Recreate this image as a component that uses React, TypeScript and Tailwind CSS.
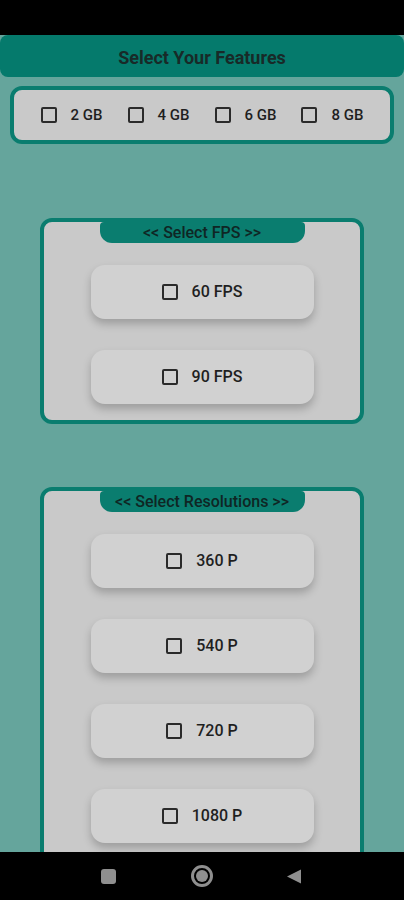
import React, { useState } from "react";

function Box({ checked }: { checked: boolean }) {
  return (
    <span
      className={
        "flex h-[16px] w-[16px] items-center justify-center rounded-[2px] border-2 border-[#2a2a2a] " +
        (checked ? "bg-[#00796b] border-[#00796b]" : "")
      }
    >
      {checked && (
        <svg viewBox="0 0 16 16" className="h-[12px] w-[12px]">
          <path d="M3 8.5l3 3 7-7" stroke="white" strokeWidth="2.2" fill="none" />
        </svg>
      )}
    </span>
  );
}

function OptionButton({ label }: { label: string }) {
  const [on, setOn] = useState(false);
  return (
    <button
      onClick={() => setOn(!on)}
      className="flex h-[54px] w-[223px] shrink-0 items-center justify-center gap-[14px] rounded-[14px] bg-[#d1d1d1] shadow-[0_5px_8px_rgba(0,0,0,0.22)]"
    >
      <Box checked={on} />
      <span className="text-[16px] font-medium text-[#1f1f1f]">{label}</span>
    </button>
  );
}

function Section({ title, items }: { title: string; items: string[] }) {
  return (
    <div className="mx-[40px] flex flex-col items-center rounded-[12px] border-4 border-[#0a7d6f] bg-[#c9c9c9] pb-[16px]">
      <div className="flex h-[21px] w-[205px] items-center justify-center rounded-b-[12px] rounded-t-[4px] bg-[#0a7d6f] text-[16px] font-medium leading-none text-[#0f2624]">
        {title}
      </div>
      <div className="mt-[22px] flex flex-col gap-[31px]">
        {items.map((it) => (
          <OptionButton key={it} label={it} />
        ))}
      </div>
    </div>
  );
}

export default function App() {
  const [ram, setRam] = useState<string[]>([]);
  const rams = ["2 GB", "4 GB", "6 GB", "8 GB"];

  return (
    <div className="flex h-[900px] w-[404px] flex-col overflow-hidden bg-black font-['Roboto',sans-serif]">
      <div className="h-[35px] shrink-0 bg-black" />
      <div className="flex-1 overflow-hidden bg-[#65a59c]">
        <div className="flex h-[42px] items-center justify-center rounded-[8px] bg-[#057a6c] pt-[2px] text-[18px] font-bold text-[#182a28]">
          Select Your Features
        </div>
        <div className="mx-[10px] mt-[9px] flex h-[58px] items-center justify-center gap-[25px] rounded-[12px] border-4 border-[#0a7d6f] bg-[#c9c9c9]">
          {rams.map((r) => (
            <button
              key={r}
              onClick={() =>
                setRam((prev) => (prev.includes(r) ? prev.filter((x) => x !== r) : [...prev, r]))
              }
              className="flex items-center gap-[14px]"
            >
              <Box checked={ram.includes(r)} />
              <span className="text-[15px] font-medium text-[#1f1f1f]">{r}</span>
            </button>
          ))}
        </div>

        <div className="mt-[74px]">
          <Section title="<< Select FPS >>" items={["60 FPS", "90 FPS"]} />
        </div>

        <div className="mt-[63px]">
          <Section title="<< Select Resolutions >>" items={["360 P", "540 P", "720 P", "1080 P"]} />
        </div>
      </div>

      <div className="flex h-[48px] shrink-0 items-center bg-black">
        <span className="ml-[101px] h-[15px] w-[15px] rounded-[3px] bg-[#8f8f8f]" />
        <span className="ml-[75px] h-[22px] w-[22px] rounded-full border-[3px] border-[#8f8f8f] p-[2px]">
          <span className="block h-full w-full rounded-full bg-[#8f8f8f]" />
        </span>
        <svg viewBox="0 0 16 16" className="ml-[73px] h-[17px] w-[16px]">
          <path d="M15 1 L1 8 L15 15 Z" fill="#8f8f8f" />
        </svg>
      </div>
    </div>
  );
}
